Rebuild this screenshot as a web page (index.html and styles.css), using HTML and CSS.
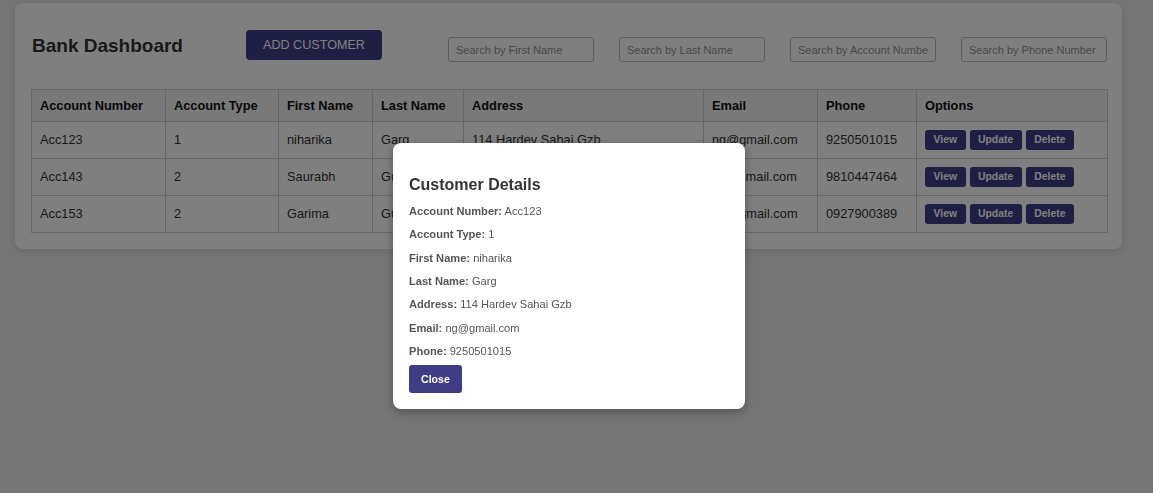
FILE: index.html
```html
<!DOCTYPE html>
<html lang="en">
<head>
<meta charset="utf-8">
<title>Bank Dashboard</title>
<link rel="stylesheet" href="styles.css">
</head>
<body>
<div class="page">
  <div class="card">
    <div class="header">
      <div class="header-left">
        <h2 class="title">Bank Dashboard</h2>
        <button class="btn btn-add">ADD CUSTOMER</button>
      </div>
      <div class="searches">
        <input class="search" type="text" placeholder="Search by First Name">
        <input class="search" type="text" placeholder="Search by Last Name">
        <input class="search" type="text" placeholder="Search by Account Number">
        <input class="search" type="text" placeholder="Search by Phone Number">
      </div>
    </div>
    <table class="customers">
      <colgroup>
        <col class="c-acc"><col class="c-type"><col class="c-first"><col class="c-last">
        <col class="c-addr"><col class="c-email"><col class="c-phone"><col class="c-opt">
      </colgroup>
      <thead>
        <tr>
          <th>Account Number</th><th>Account Type</th><th>First Name</th><th>Last Name</th>
          <th>Address</th><th>Email</th><th>Phone</th><th>Options</th>
        </tr>
      </thead>
      <tbody>
        <tr>
          <td>Acc123</td><td>1</td><td>niharika</td><td>Garg</td><td>114 Hardev Sahai Gzb</td>
          <td>ng@gmail.com</td><td>9250501015</td>
          <td><div class="actions"><button class="btn btn-sm">View</button><button class="btn btn-sm">Update</button><button class="btn btn-sm">Delete</button></div></td>
        </tr>
        <tr>
          <td>Acc143</td><td>2</td><td>Saurabh</td><td>Gupta</td><td>22 Raj Nagar Gzb</td>
          <td>sg@gmail.com</td><td>9810447464</td>
          <td><div class="actions"><button class="btn btn-sm">View</button><button class="btn btn-sm">Update</button><button class="btn btn-sm">Delete</button></div></td>
        </tr>
        <tr>
          <td>Acc153</td><td>2</td><td>Garima</td><td>Gupta</td><td>22 Raj Nagar Gzb</td>
          <td>gg@gmail.com</td><td>0927900389</td>
          <td><div class="actions"><button class="btn btn-sm">View</button><button class="btn btn-sm">Update</button><button class="btn btn-sm">Delete</button></div></td>
        </tr>
      </tbody>
    </table>
  </div>
</div>

<div class="overlay"></div>

<div class="modal">
  <h3 class="modal-title">Customer Details</h3>
  <p class="detail"><strong>Account Number:</strong> Acc123</p>
  <p class="detail"><strong>Account Type:</strong> 1</p>
  <p class="detail"><strong>First Name:</strong> niharika</p>
  <p class="detail"><strong>Last Name:</strong> Garg</p>
  <p class="detail"><strong>Address:</strong> 114 Hardev Sahai Gzb</p>
  <p class="detail"><strong>Email:</strong> ng@gmail.com</p>
  <p class="detail"><strong>Phone:</strong> 9250501015</p>
  <button class="btn btn-close">Close</button>
</div>
</body>
</html>
```

FILE: styles.css
```css
* {
  box-sizing: border-box;
}

html, body {
  margin: 0;
  padding: 0;
  height: 100%;
}

body {
  background: #ededed;
  font-family: "Liberation Sans", Arial, sans-serif;
  color: #333;
}

.page {
  padding: 3px 31px 0 15px;
}

.card {
  background: #ffffff;
  border-radius: 8px;
  padding: 16px 15px 16px 16px;
  box-shadow: 0 2px 8px rgba(0, 0, 0, 0.12);
}

.header {
  display: flex;
  justify-content: space-between;
  align-items: flex-start;
  height: 70px;
}

.header-left {
  display: flex;
  align-items: flex-start;
}

.title {
  margin: 16px 0 0 1px;
  font-size: 19px;
  line-height: 22px;
  font-weight: bold;
  color: #333;
}

.btn {
  font-family: "Liberation Sans", Arial, sans-serif;
  background: #3f3d86;
  color: #ffffff;
  border: none;
  border-radius: 3px;
  cursor: pointer;
}

.btn-add {
  margin: 11px 0 0 63px;
  padding: 8px 17px;
  font-size: 12.6px;
  line-height: 14px;
  height: 30px;
  border-radius: 4px;
}

.searches {
  display: flex;
  gap: 25px;
  margin-top: 18px;
}

.search {
  width: 146px;
  height: 25px;
  padding: 0 7px;
  border: 1px solid #bdbdbd;
  border-radius: 3px;
  font-family: "Liberation Sans", Arial, sans-serif;
  font-size: 11px;
  color: #333;
  background: #fff;
}

.search::placeholder {
  color: #8f8f8f;
}

.customers {
  width: 100%;
  table-layout: fixed;
  border-collapse: collapse;
  font-size: 12.8px;
}

.c-acc { width: 134px; }
.c-type { width: 113px; }
.c-first { width: 94px; }
.c-last { width: 91px; }
.c-addr { width: 240px; }
.c-email { width: 114px; }
.c-phone { width: 99px; }
.c-opt { width: 191px; }

.customers th,
.customers td {
  border: 1px solid #cfcfcf;
  padding: 8px;
  text-align: left;
  white-space: nowrap;
  overflow: hidden;
}

.customers th {
  background: #f2f2f2;
  font-weight: bold;
  color: #111;
  line-height: 15px;
}

.customers td {
  color: #333;
  line-height: 20px;
  vertical-align: middle;
}

.actions {
  display: flex;
  gap: 4px;
}

.btn-sm {
  height: 20px;
  padding: 0 8.5px;
  font-size: 10.4px;
  line-height: 20px;
  font-weight: bold;
}

.overlay {
  position: fixed;
  inset: 0;
  background: rgba(0, 0, 0, 0.5);
}

.modal {
  position: absolute;
  top: 143px;
  left: 393px;
  width: 352px;
  padding: 16px;
  background: #ffffff;
  border-radius: 8px;
  box-shadow: 0 3px 10px rgba(0, 0, 0, 0.3);
}

.modal-title {
  margin: 16px 0 0;
  font-size: 16px;
  line-height: 19px;
  font-weight: bold;
  color: #333;
}

.detail {
  margin: 11.2px 0 0;
  font-size: 11.1px;
  line-height: 12.1px;
  color: #555;
}

.detail strong {
  font-weight: bold;
  color: #555;
}

.btn-close {
  display: block;
  margin-top: 8px;
  height: 28px;
  padding: 0 12px;
  font-size: 10.6px;
  font-weight: bold;
  line-height: 28px;
}
```
